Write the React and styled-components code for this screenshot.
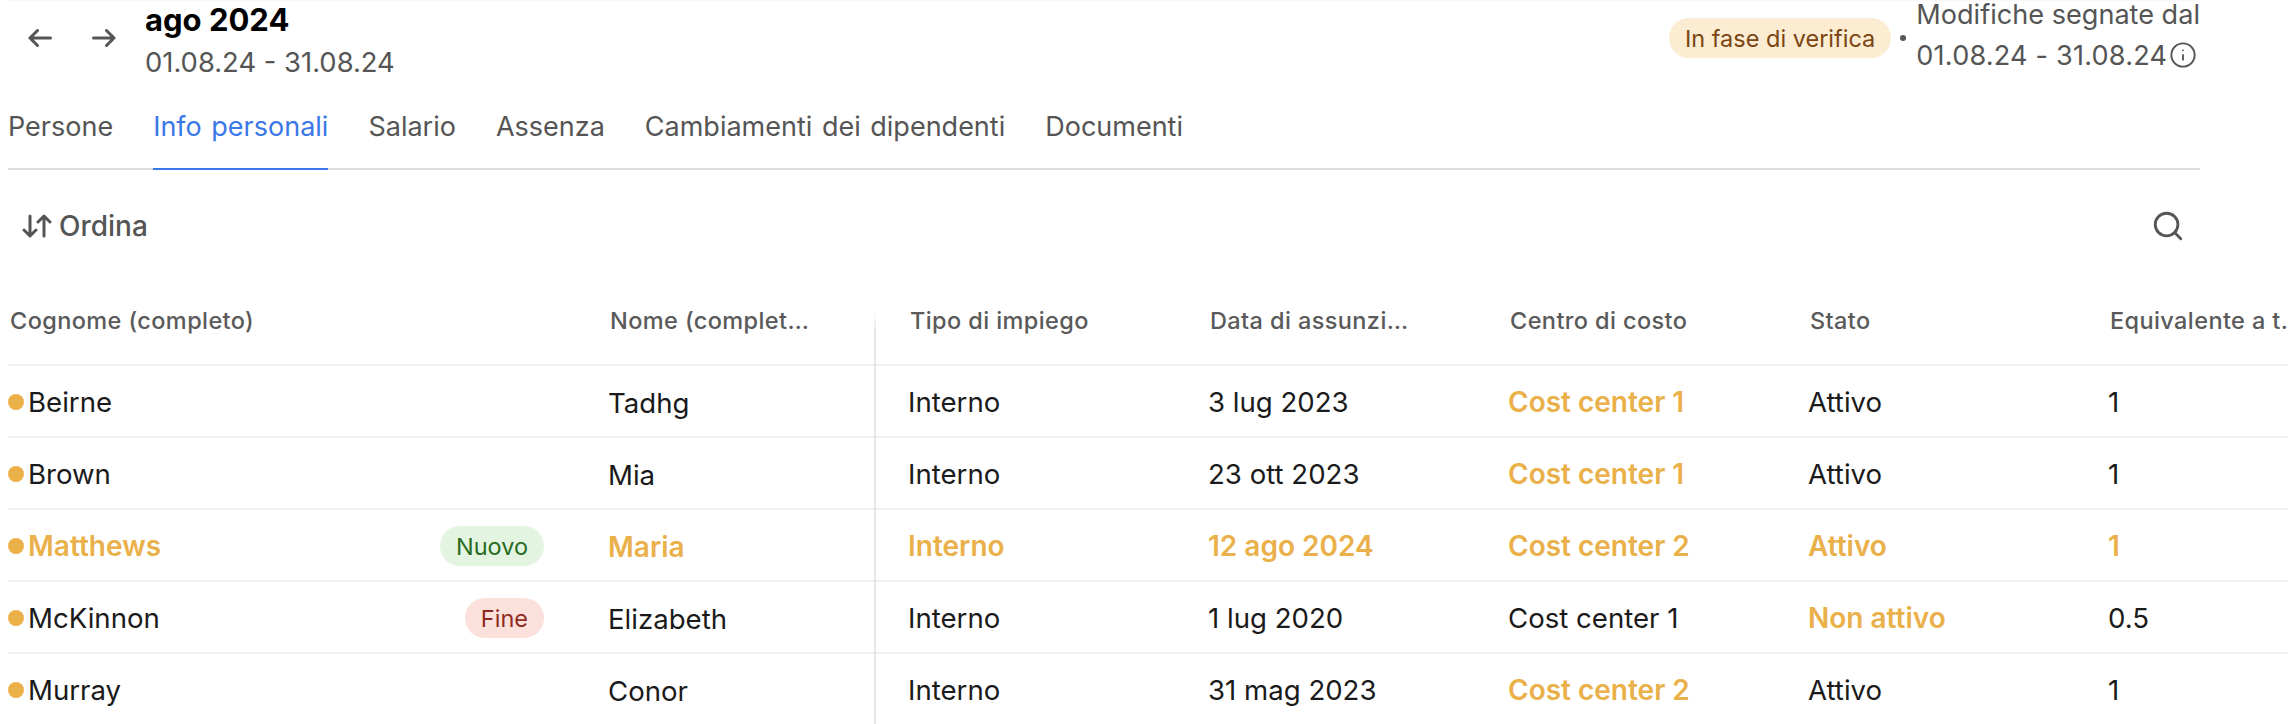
import React from "react";
import styled, { createGlobalStyle } from "styled-components";
import { Info, Search } from "lucide-react";

const Global = createGlobalStyle`
  html, body { margin: 0; padding: 0; background: #fff; }
  body { font-family: Inter, "Noto Sans", sans-serif; }
`;

const Page = styled.div`
  width: 2288px;
  height: 724px;
  overflow: hidden;
  box-sizing: border-box;
  padding-left: 8px;
  background: #fff;
  color: #1a1a1a;
  font-family: Inter, "Noto Sans", sans-serif;
`;

const TopBar = styled.header`
  width: 2192px;
  height: 98px;
  box-sizing: border-box;
  border-top: 1px solid #f8f8f8;
  display: flex;
  justify-content: space-between;
  align-items: flex-start;
`;

const PeriodGroup = styled.div`
  display: flex;
  align-items: flex-start;
`;

const ArrowButtons = styled.div`
  display: flex;
  gap: 40px;
  padding: 28px 29px 0 20px;
  color: #555;
`;

const PeriodText = styled.div`
  display: flex;
  flex-direction: column;
  margin-top: -1px;
`;

const PeriodTitle = styled.div`
  font-size: 31px;
  font-weight: 700;
  line-height: 40px;
  color: #000;
`;

const PeriodRange = styled.div`
  font-size: 27.4px;
  line-height: 44px;
  color: #555;
`;

const StatusGroup = styled.div`
  display: flex;
  align-items: flex-start;
`;

const Pill = styled.span`
  display: inline-flex;
  align-items: center;
  height: 40px;
  padding: 0 ${(p) => p.$pad || 16}px;
  border-radius: 20px;
  font-size: 23.5px;
  background: ${(p) => p.$bg};
  color: ${(p) => p.$fg};
  white-space: nowrap;
`;

const StatusPill = styled(Pill)`
  margin-top: 17px;
`;

const Bullet = styled.span`
  width: 6px;
  height: 6px;
  border-radius: 50%;
  background: #555;
  margin: 34px 10px 0 9px;
`;

const ChangesNote = styled.div`
  font-size: 27.1px;
  color: #555;
  white-space: nowrap;
`;

const ChangesTitle = styled.div`
  line-height: 28px;
`;

const ChangesLine = styled.div`
  display: flex;
  align-items: center;
  gap: 2px;
  height: 52px;
  letter-spacing: 0.2px;
`;

const Tabs = styled.nav`
  width: 2192px;
  height: 72px;
  box-sizing: border-box;
  display: flex;
  gap: 40px;
  border-bottom: 2px solid #dcdcdc;
`;

const Tab = styled.div`
  height: 72px;
  box-sizing: border-box;
  padding-top: 11px;
  font-size: 27px;
  word-spacing: 2px;
  line-height: 36px;
  color: ${(p) => (p.$active ? "#3b78e7" : "#555")};
  border-bottom: 2px solid ${(p) => (p.$active ? "#3b78e7" : "transparent")};
`;

const Toolbar = styled.div`
  width: 2192px;
  height: 114px;
  display: flex;
  align-items: center;
  justify-content: space-between;
  padding: 0 15px 2px 14px;
  box-sizing: border-box;
  color: #555;
`;

const SortButton = styled.div`
  display: flex;
  align-items: center;
  gap: 7px;
  font-size: 28px;
  font-weight: 500;
`;

const Table = styled.div`
  width: 2280px;
`;

const Row = styled.div`
  display: grid;
  grid-template-columns: 592px 276px 324px 300px 300px 300px 188px;
  height: ${(p) => (p.$head ? 82 : 72)}px;
  box-sizing: border-box;
  border-bottom: 2px solid #f0f0f0;
`;

const HeadCell = styled.div`
  position: relative;
  display: flex;
  align-items: flex-start;
  padding: 21px 0 0 ${(p) => p.$pad}px;
  box-sizing: border-box;
  ${(p) =>
    p.$divider &&
    `&::after { content: ""; position: absolute; right: 0; top: 26px; bottom: -2px; width: 2px; background: linear-gradient(#fff, #e6e6e6 40%); }`}
`;

const HeadLabel = styled.span`
  display: block;
  font-size: 23.5px;
  line-height: 32px;
  font-weight: 500;
  letter-spacing: 0.4px;
  color: #5a5a5a;
  white-space: nowrap;
`;

const Cell = styled.div`
  display: flex;
  align-items: center;
  box-sizing: border-box;
  padding-top: 2px;
  padding-left: ${(p) => p.$pad}px;
  font-size: ${(p) => (p.$hot ? 28 : 27.6)}px;
  font-weight: ${(p) => (p.$hot ? 600 : 400)};
  color: ${(p) => (p.$hot ? "#eab04a" : "#1a1a1a")};
  white-space: nowrap;
  ${(p) => p.$divider && `border-right: 2px solid #e6e6e6; margin-bottom: -2px;`}
`;

const NameCell = styled(Cell)`
  justify-content: space-between;
  padding-right: 56px;
`;

const NameWrap = styled.span`
  display: flex;
  align-items: center;
  gap: 4px;
`;

const Dot = styled.span`
  width: 16px;
  height: 16px;
  border-radius: 50%;
  background: #eab04a;
`;

const BadgePill = styled(Pill)`
  font-weight: 400;
`;

const rows = [
  { s: "Beirne", n: "Tadhg", t: "Interno", d: "3 lug 2023", c: "Cost center 1", st: "Attivo", e: "1", hot: ["c"] },
  { s: "Brown", n: "Mia", t: "Interno", d: "23 ott 2023", c: "Cost center 1", st: "Attivo", e: "1", hot: ["c"] },
  { s: "Matthews", n: "Maria", t: "Interno", d: "12 ago 2024", c: "Cost center 2", st: "Attivo", e: "1", hot: ["s", "n", "t", "d", "c", "st", "e"], badge: "Nuovo" },
  { s: "McKinnon", n: "Elizabeth", t: "Interno", d: "1 lug 2020", c: "Cost center 1", st: "Non attivo", e: "0.5", hot: ["st"], badge: "Fine" },
  { s: "Murray", n: "Conor", t: "Interno", d: "31 mag 2023", c: "Cost center 2", st: "Attivo", e: "1", hot: ["c"] },
];

const badgeColors = {
  Nuovo: { bg: "#e3f5e1", fg: "#2a6b22" },
  Fine: { bg: "#fbe0db", fg: "#8e2a1e" },
};

const ArrowLeftIcon = () => (
  <svg width="24" height="18" viewBox="0 0 24 18" fill="none" stroke="currentColor" strokeWidth="3" strokeLinecap="round" strokeLinejoin="round">
    <path d="M2 9H22.5M9.5 1.5L2 9l7.5 7.5" />
  </svg>
);

const ArrowRightIcon = () => (
  <svg width="24" height="18" viewBox="0 0 24 18" fill="none" stroke="currentColor" strokeWidth="3" strokeLinecap="round" strokeLinejoin="round">
    <path d="M22 9H1.5M14.5 1.5L22 9l-7.5 7.5" />
  </svg>
);

const SortIcon = () => (
  <svg width="30" height="24" viewBox="0 0 30 24" fill="none" stroke="currentColor" strokeWidth="3" strokeLinecap="round" strokeLinejoin="round">
    <path d="M8 2V22M2 16l6 6 6-6" />
    <path d="M22 22V2M16 8l6-6 6 6" />
  </svg>
);

export default function App() {
  return (
    <Page>
      <Global />
      <TopBar>
        <PeriodGroup>
          <ArrowButtons>
            <ArrowLeftIcon />
            <ArrowRightIcon />
          </ArrowButtons>
          <PeriodText>
            <PeriodTitle>ago 2024</PeriodTitle>
            <PeriodRange>01.08.24 - 31.08.24</PeriodRange>
          </PeriodText>
        </PeriodGroup>
        <StatusGroup>
          <StatusPill $bg="#fbecd2" $fg="#7a4510">In fase di verifica</StatusPill>
          <Bullet />
          <ChangesNote>
            <ChangesTitle>Modifiche segnate dal</ChangesTitle>
            <ChangesLine>
              01.08.24 - 31.08.24
              <Info size={28} strokeWidth={1.6} />
            </ChangesLine>
          </ChangesNote>
        </StatusGroup>
      </TopBar>
      <Tabs>
        <Tab>Persone</Tab>
        <Tab $active>Info personali</Tab>
        <Tab>Salario</Tab>
        <Tab>Assenza</Tab>
        <Tab>Cambiamenti dei dipendenti</Tab>
        <Tab>Documenti</Tab>
      </Tabs>
      <Toolbar>
        <SortButton>
          <SortIcon />
          Ordina
        </SortButton>
        <Search size={34} strokeWidth={2} />
      </Toolbar>
      <Table>
        <Row $head>
          <HeadCell $pad={2}><HeadLabel>Cognome (completo)</HeadLabel></HeadCell>
          <HeadCell $pad={10} $divider><HeadLabel>Nome (complet…</HeadLabel></HeadCell>
          <HeadCell $pad={34}><HeadLabel>Tipo di impiego</HeadLabel></HeadCell>
          <HeadCell $pad={10}><HeadLabel>Data di assunzi…</HeadLabel></HeadCell>
          <HeadCell $pad={10}><HeadLabel>Centro di costo</HeadLabel></HeadCell>
          <HeadCell $pad={10}><HeadLabel>Stato</HeadLabel></HeadCell>
          <HeadCell $pad={10}><HeadLabel>Equivalente a t.</HeadLabel></HeadCell>
        </Row>
        {rows.map((r) => (
          <Row key={r.s}>
            <NameCell $pad={0} $hot={r.hot.includes("s")}>
              <NameWrap><Dot />{r.s}</NameWrap>
              {r.badge && (
                <BadgePill $bg={badgeColors[r.badge].bg} $fg={badgeColors[r.badge].fg}>
                  {r.badge}
                </BadgePill>
              )}
            </NameCell>
            <Cell $pad={8} $divider $hot={r.hot.includes("n")}>{r.n}</Cell>
            <Cell $pad={32} $hot={r.hot.includes("t")}>{r.t}</Cell>
            <Cell $pad={8} $hot={r.hot.includes("d")}>{r.d}</Cell>
            <Cell $pad={8} $hot={r.hot.includes("c")}>{r.c}</Cell>
            <Cell $pad={8} $hot={r.hot.includes("st")}>{r.st}</Cell>
            <Cell $pad={8} $hot={r.hot.includes("e")}>{r.e}</Cell>
          </Row>
        ))}
      </Table>
    </Page>
  );
}
